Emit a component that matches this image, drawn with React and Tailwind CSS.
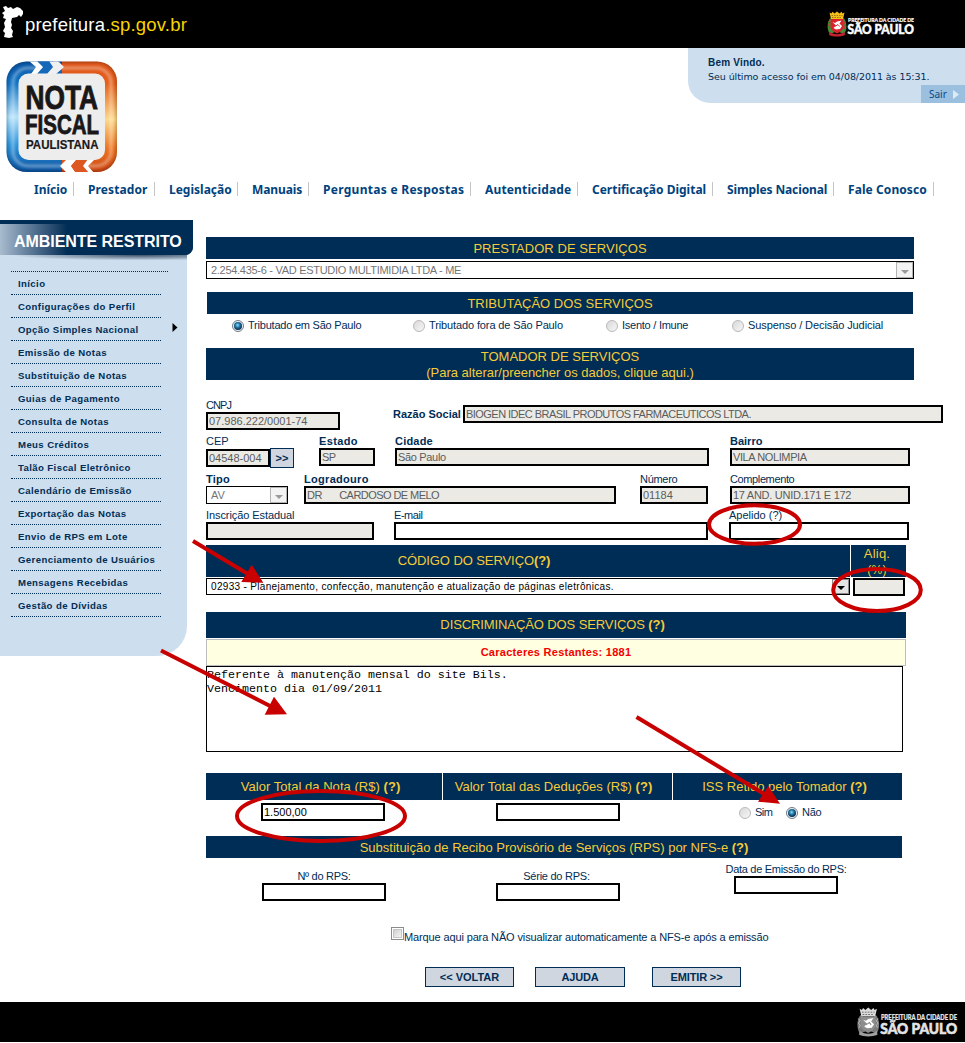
import React from "react";

const NAV = [
  ["Início", "w-[40px]"],
  ["Prestador", "w-[67px] tracking-[0.1px]"],
  ["Legislação", "w-[69px]"],
  ["Manuais", "w-[57px] tracking-[-0.1px]"],
  ["Perguntas e Respostas", "w-[148px] tracking-[0.28px]"],
  ["Autenticidade", "w-[93px] tracking-[0.15px]"],
  ["Certificação Digital", "w-[121px]"],
  ["Simples Nacional", "w-[107px] tracking-[-0.12px]"],
  ["Fale Conosco", "w-[86px] tracking-[0.08px]"],
];

const MENU = [
  "Início",
  "Configurações do Perfil",
  "Opção Simples Nacional",
  "Emissão de Notas",
  "Substituição de Notas",
  "Guias de Pagamento",
  "Consulta de Notas",
  "Meus Créditos",
  "Talão Fiscal Eletrônico",
  "Calendário de Emissão",
  "Exportação das Notas",
  "Envio de RPS em Lote",
  "Gerenciamento de Usuários",
  "Mensagens Recebidas",
  "Gestão de Dívidas",
];

function CityLogo({ mono = false, className = "" }) {
  const red = mono ? "#8d8d8d" : "#d8232a";
  const gold = mono ? "#dcdcdc" : "#f3c018";
  const green = mono ? "#7b7b7b" : "#3f8f3a";
  const sub = mono ? "#e4e4e4" : "#ffffff";
  return (
    <svg className={className} viewBox="0 0 88 26" fill="none">
      <path d="M3.500 7 C0 10 -0.500 19 3 23 L8 21 L5 8Z M16.500 7 C20 10 20.500 19 17 23 L12 21 L15 8Z" fill={green} />
      <path d="M1.500 10 L3 12 L1.500 14 L3 16 L2 18 M18.500 10 L17 12 L18.500 14 L17 16 L18 18" stroke={mono ? "#c0c0c0" : "#d8232a"} strokeWidth="0.8" />
      <path d="M2.500 1.500 L4.500 2.500 L5.500 0.800 L7.500 2.500 L10 0.500 L12.500 2.500 L14.500 0.800 L15.500 2.500 L17.500 1.500 L16 8 H4Z" fill={gold} />
      <path d="M4.500 4.500 H15.500 M5 6.500 H15" stroke={mono ? "#555" : "#7a5a10"} strokeWidth="0.700" strokeDasharray="1.500 1" />
      <path d="M3.500 8 H16.500 V15 C16.500 19 13 21 10 22.500 C7 21 3.500 19 3.500 15Z" fill={red} />
      <path d="M5.500 11 L8 12 L10 10.500 L14.500 9.500 L12.500 12.500 L15 15 L13 18 L9 18.500 L6.500 17 L9 14.500Z" fill="#fff" />
      <path d="M8 15.500 L11 13.500 L12.500 15.500" stroke={red} strokeWidth="0.900" />
      <path d="M2.500 20.500 C6 24 14 24 17.500 20.500 L18 24 C13 26 7 26 2 24Z" fill={mono ? "#a0a0a0" : "#c4222c"} />
      <text x="21" y="11" textLength="66" lengthAdjust="spacingAndGlyphs" fontFamily="Lato, sans-serif" fontWeight="900" fontSize="5.600" fill={sub} stroke={sub} strokeWidth="0.150">
        PREFEITURA DA CIDADE DE
      </text>
      <text x="20.500" y="23" textLength="66.500" lengthAdjust="spacingAndGlyphs" fontFamily="Lato, sans-serif" fontWeight="900" fontSize="13" fill={sub} stroke={sub} strokeWidth="0.500">
        SÃO PAULO
      </text>
    </svg>
  );
}

function NotaFiscalLogo() {
  const font = "'Liberation Sans', Arial, sans-serif";
  return (
    <svg className="block h-[112px] w-[112px]" viewBox="0 0 112 112">
      <defs>
        <linearGradient id="blue" x1="0" y1="0" x2="0" y2="1">
          <stop offset="0" stopColor="#0a55a5" />
          <stop offset="0.2" stopColor="#1173c4" />
          <stop offset="0.5" stopColor="#b5e2fb" />
          <stop offset="0.75" stopColor="#2c94dc" />
          <stop offset="1" stopColor="#0a4f9d" />
        </linearGradient>
        <linearGradient id="orange" x1="0" y1="0" x2="0" y2="1">
          <stop offset="0" stopColor="#dd551b" />
          <stop offset="0.2" stopColor="#e5601b" />
          <stop offset="0.52" stopColor="#fdd98a" />
          <stop offset="0.78" stopColor="#ec7421" />
          <stop offset="1" stopColor="#cb4312" />
        </linearGradient>
        <filter id="soft"><feGaussianBlur stdDeviation="1.200" /></filter>
        <clipPath id="frame">
          <rect x="0.500" y="0.500" width="110.500" height="110.500" rx="20" />
        </clipPath>
      </defs>
      <g clipPath="url(#frame)">
        <rect width="56" height="112" fill="url(#blue)" />
        <rect x="56" width="56" height="112" fill="url(#orange)" />
        <rect x="0.500" y="0.500" width="110.500" height="110.500" rx="20" fill="none" stroke="#000" strokeOpacity="0.220" strokeWidth="3" filter="url(#soft)" />
        <rect x="7" y="7" width="98" height="98" rx="15" fill="none" stroke="#fff" strokeOpacity="0.300" strokeWidth="3.500" filter="url(#soft)" />
        <path d="M31 0 H47 L47 13 H31 L37 6Z" fill="#1568b9" />
        <path d="M23 0 H31 L37 6 L31 13 H25 L30 6Z" fill="#fff" />
        <path d="M43 0 H52 L58 6 L50 13 H41 L47 6Z" fill="#eef0f2" />
        <path d="M61 98 H71 L65 105 L70 112 H61 L54 105Z" fill="#fff" />
        <path d="M71 98 H84 L78 105 L83 112 H70 L65 105Z" fill="#dd5722" />
        <path d="M82 98 H89 L82 105 L88 112 H83 L77 105Z" fill="#fff" />
      </g>
      <rect x="12.500" y="12.500" width="86.500" height="86.500" rx="10" fill="#ededee" />
      <g fill="#191718" stroke="#191718" fontFamily={font} fontWeight="bold">
        <text x="19.500" y="47.500" fontSize="33.500" textLength="72.500" lengthAdjust="spacingAndGlyphs" strokeWidth="0.900">NOTA</text>
        <text x="19" y="73" fontSize="27" textLength="74" lengthAdjust="spacingAndGlyphs" strokeWidth="0.800">FISCAL</text>
        <text x="20" y="88" fontSize="13.500" textLength="72.500" lengthAdjust="spacingAndGlyphs" strokeWidth="0.200">PAULISTANA</text>
      </g>
    </svg>
  );
}

function Header() {
  return (
    <header className="flex h-12 items-start justify-between bg-black">
      <div className="flex">
        <svg className="mt-[5px] h-[34px] w-[25px]" viewBox="0 0 25 34">
          <path d="M3 2 L6 1 L8 3 L11 2 L13 4 L17 2 L20 3 L23 6 L23 9 L21 12 L19 10 L17 12 L12 13 L11 17 L12 20 L11 23 L13 26 L12 30 L13 32 L9 33 L4 32 L5 28 L3 26 L5 22 L4 18 L6 14 L3 13 L4 10 L2 8 L5 6Z" fill="#fff" />
        </svg>
        <p className="mt-[13px] text-[18.500px] leading-[24px] tracking-[0.200px] text-white">
          prefeitura<span className="text-[#f8d400]">.sp.gov.br</span>
        </p>
      </div>
      <CityLogo className="mt-[11px] mr-[50px] h-[26px] w-[88px]" />
    </header>
  );
}

function Sidebar() {
  return (
    <aside className="h-[436px] w-[193px] shrink-0">
      <div className="relative z-10 h-[35px] overflow-hidden rounded-br-[8px] bg-[#002d55]">
        <div className="mt-1 flex h-[31px] items-center bg-linear-to-r from-[#a9bccf] to-[#002d55] to-35% pt-[4px] pl-[14px] text-[16px] font-bold tracking-[-0.050px] whitespace-nowrap text-white">
          AMBIENTE RESTRITO
        </div>
      </div>
      <nav className="flex h-[401px] w-[187px] flex-col rounded-br-[30px] bg-[#cddeee] text-[#002d55]">
        <div className="h-[6px] bg-[radial-gradient(ellipse_at_75%_0%,#3c5168_0%,transparent_65%)]" />
        <div className="mt-[10px] ml-[11px] w-[157px] border-t border-dotted border-[#002d55]" />
        {MENU.map((item) => (
          <a key={item} className="ml-[11px] flex h-[23px] w-[167px] flex-col">
            <span className="flex h-[22px] items-center justify-between pt-[2px] pl-[7px] text-[9.600px] font-bold tracking-[0.390px] whitespace-nowrap">
              {item}
              {item === "Opção Simples Nacional" && (
                <svg className="mb-[5px] h-[9px] w-[6px]" viewBox="0 0 6 9"><path d="M0.500 0 L5.500 4.500 L0.500 9Z" fill="#000" /></svg>
              )}
            </span>
            <span className="w-[150px] border-t border-dotted border-[#002d55]" />
          </a>
        ))}
      </nav>
    </aside>
  );
}

function Bar({ className, children }) {
  return (
    <div className={`flex flex-col items-center justify-center bg-[#002d55] text-center text-[13px] leading-4 whitespace-nowrap text-[#f5cb3a] ${className}`}>
      {children}
    </div>
  );
}

function TextBox({ value = "", locked = false, className = "" }) {
  return (
    <input
      readOnly
      value={value}
      className={`block h-[18px] shrink-0 rounded-none border-2 border-black px-[1px] text-[11px] outline-none ${locked ? "bg-[#ebeae4] text-[#5c5c5c]" : "bg-white text-black"} ${className}`}
    />
  );
}

function Field({ label, bold = false, labelClass = "", className = "", boxClass = "", ...box }) {
  return (
    <label className={`flex shrink-0 flex-col ${className}`}>
      <span className={`h-[14px] text-[11px] leading-[14px] whitespace-nowrap ${bold ? "font-bold" : ""} ${labelClass}`}>{label}</span>
      <TextBox {...box} className={boxClass} />
    </label>
  );
}

function SelectBox({ value, active = false, className, textClass = "" }) {
  return (
    <div className={`flex shrink-0 items-center justify-between border border-black bg-white pl-1 ${className}`}>
      <span className={`whitespace-nowrap ${active ? "text-black" : "text-[#757575]"} ${textClass}`}>{value}</span>
      <span className={`flex h-full w-[17px] items-center justify-center border ${active ? "border-[#8a8a8a] bg-[#e4e4e4]" : "border-[#b4b4b4] bg-[#f3f3f3]"}`}>
        <svg className="mt-[3px] h-[4px] w-[8px]" viewBox="0 0 8 4"><path d="M0 0H8L4 4Z" fill={active ? "#000" : "#9a9a9a"} /></svg>
      </span>
    </div>
  );
}

function Radio({ label, checked = false, className = "", textClass = "" }) {
  return (
    <label className={`flex shrink-0 items-center gap-1 text-[11px] leading-[14px] whitespace-nowrap ${className}`}>
      <span className={`mt-[2px] flex h-3 w-3 items-center justify-center rounded-full border ${checked ? "border-[#6f7b86] bg-[#eef3f7]" : "border-[#b9b9b9] bg-linear-to-br from-[#d9d9d9] to-[#f7f7f7]"}`}>
        {checked && <span className="h-[8px] w-[8px] rounded-full bg-[radial-gradient(circle_at_45%_40%,#8fdcf8_0%,#1f78a8_35%,#0b2d4d_70%)]" />}
      </span>
      <span className={textClass}>{label}</span>
    </label>
  );
}

function Help() {
  return <b>(?)</b>;
}

function InvoiceForm() {
  return (
    <main className="ml-[13px] flex w-[740px] flex-col pt-[17px]">
      <Bar className="h-[22px] w-[708px] pt-[2px] tracking-[0.050px]">PRESTADOR DE SERVIÇOS</Bar>
      <SelectBox className="mt-[2px] h-[18px] w-[708px]" textClass="text-[11px] tracking-[-0.290px]" value="2.254.435-6 - VAD ESTUDIO MULTIMIDIA LTDA - ME" />

      <Bar className="mt-[13px] ml-px h-[22px] w-[706px] pt-[2px]">TRIBUTAÇÃO DOS SERVIÇOS</Bar>
      <div className="mt-[4px] ml-[26px] flex h-[14px]">
        <Radio className="w-[181px]" textClass="tracking-[-0.220px]" checked label="Tributado em São Paulo" />
        <Radio className="w-[193px]" textClass="tracking-[-0.120px]" label="Tributado fora de São Paulo" />
        <Radio className="w-[126px]" textClass="tracking-[-0.250px]" label="Isento / Imune" />
        <Radio textClass="tracking-[-0.090px]" label="Suspenso / Decisão Judicial" />
      </div>

      <Bar className="mt-[16px] h-[32px] w-[708px] overflow-hidden pt-[2px]">
        <span>TOMADOR DE SERVIÇOS</span>
        <span className="tracking-[-0.010px]">(Para alterar/preencher os dados, clique aqui.)</span>
      </Bar>

      <div className="mt-[18px] flex h-[32px]">
        <Field label="CNPJ" value="07.986.222/0001-74" locked className="w-[134px]" labelClass="tracking-[-0.900px]" />
        <label className="mt-[7px] ml-[53px] flex h-[18px] items-center gap-[3px]">
          <span className="w-[67px] text-[11px] font-bold whitespace-nowrap">Razão Social</span>
          <TextBox locked className="w-[480px] tracking-[-0.540px]" value="BIOGEN IDEC BRASIL PRODUTOS FARMACEUTICOS LTDA." />
        </label>
      </div>

      <div className="mt-[4px] flex h-[34px]">
        <Field label="CEP" value="04548-004" locked className="w-[64px]" labelClass="mb-px" />
        <button className="mt-[14px] h-[20px] w-[24px] border border-[#002d55] bg-[#d0d6df] text-[11px] leading-[16px] font-bold">&gt;&gt;</button>
        <Field label="Estado" bold value="SP" locked className="ml-[25px] w-[56px]" labelClass="tracking-[0.350px]" boxClass="tracking-[-0.700px]" />
        <Field label="Cidade" bold value="São Paulo" locked className="ml-[20px] w-[314px]" labelClass="tracking-[0.200px]" boxClass="tracking-[-0.330px]" />
        <Field label="Bairro" bold value="VILA NOLIMPIA" locked className="ml-[21px] w-[180px]" boxClass="tracking-[-0.400px]" />
      </div>

      <div className="mt-[4px] flex h-[32px]">
        <div className="flex flex-col">
          <span className="h-[14px] text-[11px] leading-[14px] font-bold tracking-[0.200px]">Tipo</span>
          <SelectBox className="h-[18px] w-[82px]" textClass="text-[11px]" value="AV" />
        </div>
        <Field label="Logradouro" bold value={"DR\u00a0\u00a0\u00a0\u00a0\u00a0\u00a0\u00a0CARDOSO DE MELO"} locked className="ml-[16px] w-[312px]" labelClass="tracking-[0.300px]" boxClass="tracking-[-0.560px]" />
        <Field label="Número" value="01184" locked className="ml-[24px] w-[68px]" labelClass="tracking-[-0.300px]" />
        <Field label="Complemento" value="17 AND. UNID.171 E 172" locked className="ml-[22px] w-[180px]" labelClass="tracking-[-0.380px]" boxClass="tracking-[-0.270px]" />
      </div>

      <div className="mt-[4px] flex h-[32px]">
        <Field label="Inscrição Estadual" locked className="w-[168px]" labelClass="tracking-[-0.080px]" />
        <Field label="E-mail" className="ml-[20px] w-[314px]" labelClass="tracking-[-0.450px]" />
        <Field label="Apelido (?)" className="ml-[21px] w-[180px]" />
      </div>

      <div className="mt-[5px] flex gap-px">
        <Bar className="h-[32px] w-[644px] pr-[108px] tracking-[-0.080px]"><span>CÓDIGO DO SERVIÇO<Help /></span></Bar>
        <Bar className="h-[32px] w-[55px] pt-[2px] pr-[3px] tracking-[0.200px]">
          <span>Aliq.</span>
          <span className="text-[12px]">(%)</span>
        </Bar>
      </div>
      <div className="mt-px flex gap-[3px]">
        <SelectBox active className="h-[17px] w-[644px]" textClass="text-[10px] tracking-[0.320px]" value="02933 - Planejamento, confecção, manutenção e atualização de páginas eletrônicas." />
        <TextBox locked className="w-[52px]" />
      </div>

      <Bar className="mt-[16px] h-[26px] w-[700px] pr-[7px] tracking-[-0.100px]"><span>DISCRIMINAÇÃO DOS SERVIÇOS <Help /></span></Bar>
      <div className="mt-px flex h-[27px] w-[700px] items-center justify-center border border-[#bdbdbd] bg-[#ffffe1] text-[11px] font-bold tracking-[0.270px] text-[#f40000]">
        Caracteres Restantes: 1881
      </div>
      <textarea
        readOnly
        className="block h-[86px] w-[697px] resize-none border border-black bg-white pt-[1px] font-['Liberation_Mono','Courier_New',monospace] text-[11.670px] leading-[14px] text-black outline-none"
        value={"Referente à manutenção mensal do site Bils.\nVencimento dia 01/09/2011"}
      />

      <div className="mt-[21px] flex gap-px">
        <Bar className="h-[27px] w-[236px] pr-[7px] tracking-[0.040px]"><span>Valor Total da Nota (R$) <Help /></span></Bar>
        <Bar className="h-[27px] w-[229px] pr-[8px] tracking-[0.050px]"><span>Valor Total das Deduções (R$) <Help /></span></Bar>
        <Bar className="h-[27px] w-[229px] pr-[6px]"><span>ISS Retido pelo Tomador <Help /></span></Bar>
      </div>
      <div className="mt-[3px] flex h-[18px] items-center">
        <TextBox className="ml-[55px] w-[124px]" value="1.500,00" />
        <TextBox className="ml-[111px] w-[124px]" />
        <Radio className="ml-[119px] w-[47px]" textClass="tracking-[-0.500px]" label="Sim" />
        <Radio checked textClass="tracking-[-0.300px]" label="Não" />
      </div>

      <Bar className="mt-[15px] h-[22px] w-[696px] pt-[2px]"><span>Substituição de Recibo Provisório de Serviços (RPS) por NFS-e <Help /></span></Bar>
      <div className="mt-[4px] flex h-[39px]">
        <Field label="Nº do RPS:" labelClass="self-center tracking-[-0.280px]" className="mt-[7px] ml-[56px] w-[124px]" />
        <Field label="Série do RPS:" labelClass="-ml-[3px] self-center tracking-[-0.250px]" className="mt-[7px] ml-[110px] w-[124px]" />
        <Field label="Data de Emissão do RPS:" labelClass="-mx-3 self-center tracking-[-0.300px]" className="ml-[114px] w-[104px]" />
      </div>

      <label className="mt-[26px] ml-[185px] flex h-[18px] text-[11px] leading-[20px] tracking-[-0.130px] whitespace-nowrap">
        <span className="flex h-[13px] w-[13px] border border-[#8c8c8c] bg-white p-px">
          <span className="h-full w-full border border-[#c6c6c6] bg-linear-to-br from-[#cfcfcf] to-[#f5f5f5]" />
        </span>
        Marque aqui para NÃO visualizar automaticamente a NFS-e após a emissão
      </label>
      <div className="mt-[22px] ml-[219px] flex h-[20px] text-[11px] font-bold">
        <button className="w-[89px] border border-[#002d55] bg-[#d0d6df]">&lt;&lt; VOLTAR</button>
        <button className="ml-[21px] w-[90px] border border-[#002d55] bg-[#d0d6df] tracking-[-0.200px]">AJUDA</button>
        <button className="ml-[27px] w-[89px] border border-[#002d55] bg-[#d0d6df] tracking-[-0.150px]">EMITIR &gt;&gt;</button>
      </div>
    </main>
  );
}

function Annotations() {
  return (
    <svg className="pointer-events-none absolute top-0 left-0 z-20 h-[1043px] w-[965px]" viewBox="0 0 965 1043" fill="none" stroke="#c90000" strokeWidth="4">
      <ellipse cx="754.500" cy="524.500" rx="45.500" ry="19.200" />
      <ellipse cx="877" cy="590" rx="43.800" ry="21" />
      <ellipse cx="321" cy="816" rx="84" ry="25" />
      <path d="M193 541 L248 574 M161 650.500 L272 707 M636.500 717 L765 794.500" />
      <path d="M251.700 564.700 L241.300 582 L263.300 582.700Z M274 696.700 L264.700 714.700 L287 714.300Z M768.300 786 L758 801.700 L780 803.700Z" fill="#c90000" stroke="none" />
    </svg>
  );
}

export default function App() {
  return (
    <div className="relative h-[1043px] w-[965px] overflow-hidden bg-white font-['Liberation_Sans',Arial,sans-serif] text-[#002d55]">
      <Header />
      <div className="flex h-[124px] justify-between">
        <div className="mt-[13px] ml-[6px]"><NotaFiscalLogo /></div>
        <div className="flex h-[55px] w-[277px] flex-col rounded-bl-[22px] bg-[#cddeee] pt-[8px] font-['DejaVu_Sans',Verdana,sans-serif] text-[9.500px] leading-[14px] whitespace-nowrap">
          <b className="pl-5 font-['Liberation_Sans',Arial,sans-serif] text-[10px] tracking-[0.200px]">Bem Vindo.</b>
          <span className="pl-5 tracking-[-0.070px]">Seu último acesso foi em 04/08/2011 às 15:31.</span>
          <a className="mt-auto flex h-[18px] w-[44px] items-center gap-[6px] self-end bg-[#9bbfdf] pl-2 font-['Noto_Sans',Tahoma,sans-serif] text-[10px] text-[#0a4a86]">
            Sair
            <svg className="h-[9px] w-[6px]" viewBox="0 0 6 9"><path d="M0 0L6 4.500L0 9Z" fill="#dcebf8" /></svg>
          </a>
        </div>
      </div>
      <nav className="flex h-[48px] gap-[14px] pt-[10px] pl-[34px] font-['Noto_Sans',Tahoma,sans-serif] text-[12px] leading-[16px] font-bold whitespace-nowrap text-[#00427d]">
        {NAV.map(([label, width]) => (
          <a key={label} className={`h-[14px] shrink-0 border-r border-[#c4c4c4] ${width}`}>{label}</a>
        ))}
      </nav>
      <div className="flex h-[782px]">
        <Sidebar />
        <InvoiceForm />
      </div>
      <footer className="flex h-10 justify-end bg-black">
        <CityLogo mono className="mt-[5px] mr-[6px] h-[30px] w-[103px]" />
      </footer>
      <Annotations />
    </div>
  );
}
